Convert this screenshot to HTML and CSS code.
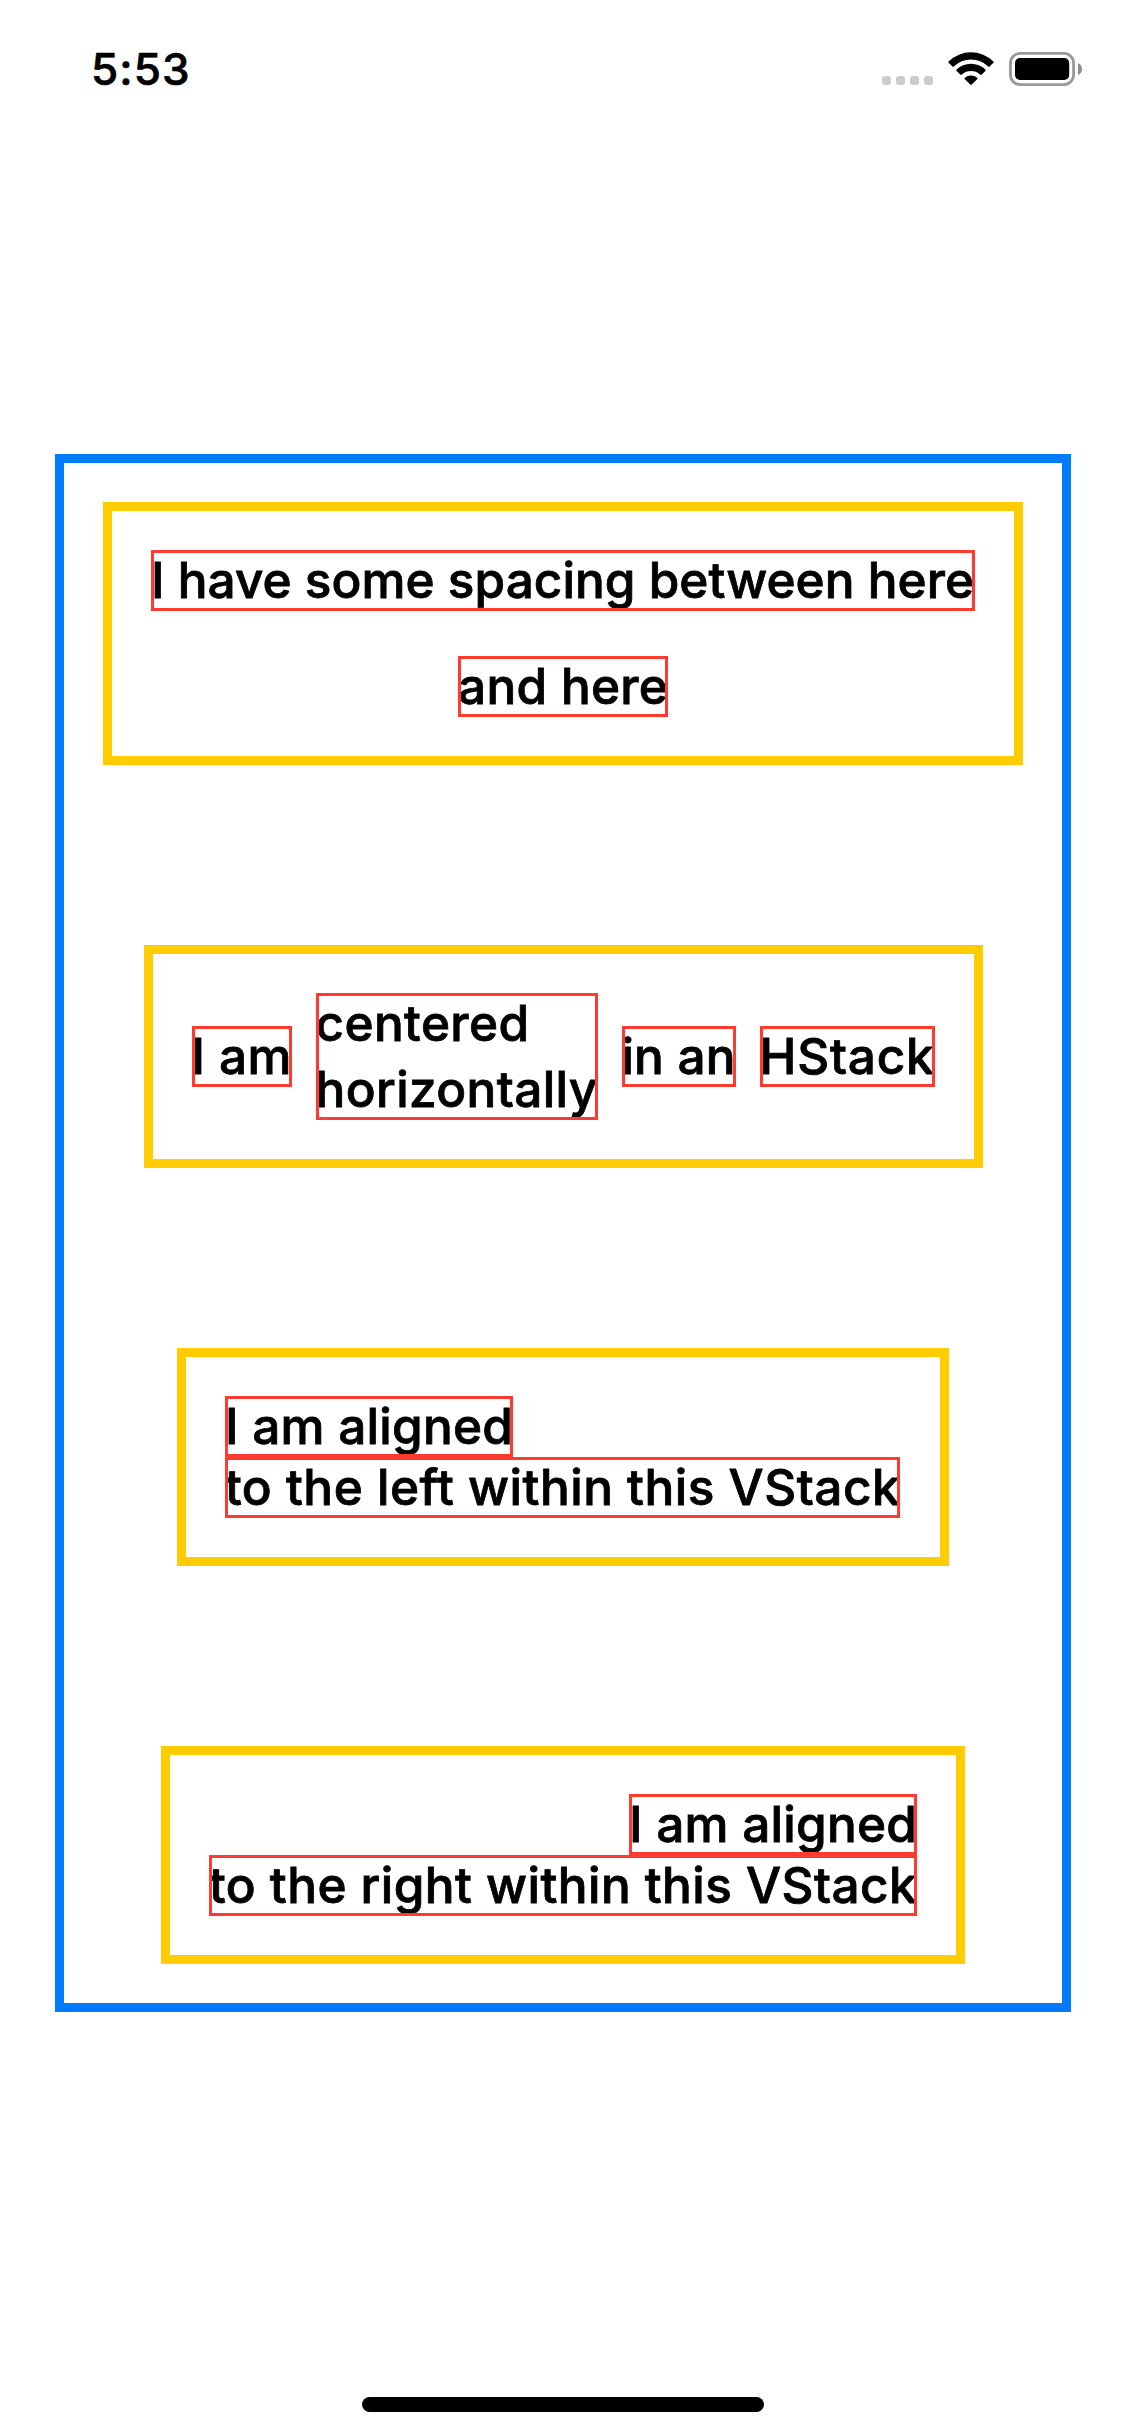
FILE: index.html
```html
<!DOCTYPE html>
<html lang="en">
<head>
<meta charset="utf-8">
<title>Stacks</title>
<link rel="stylesheet" href="styles.css">
</head>
<body>
<div class="screen">
  <header class="status-bar">
    <span class="time">5:53</span>
    <div class="indicators">
      <div class="cellular"><i class="dot"></i><i class="dot"></i><i class="dot"></i><i class="dot"></i></div>
      <svg class="wifi" width="46" height="34" viewBox="0 0 46 34" aria-label="Wi-Fi">
        <path d="M0.6 9.4A32 32 0 0 1 45.4 9.4Q46 10 45.4 10.7L41.5 14.5Q40.9 15 40.2 14.4A25 25 0 0 0 5.8 14.4Q5.1 15 4.5 14.5L0.6 10.7Q0 10 0.6 9.4Z"/>
        <path d="M8.6 17.6A20.6 20.6 0 0 1 37.4 17.6Q38 18.3 37.4 18.9L33.4 22.7Q32.8 23.2 32.1 22.6A13.6 13.6 0 0 0 13.9 22.6Q13.2 23.2 12.6 22.7L8.6 18.9Q8 18.3 8.6 17.6Z"/>
        <path d="M16.6 25.9A9.6 9.6 0 0 1 29.4 25.9Q30 26.5 29.4 27.1L23.7 32.6Q23 33.2 22.3 32.6L16.6 27.1Q16 26.5 16.6 25.9Z"/>
      </svg>
      <svg class="battery" width="74" height="34" viewBox="0 0 74 34" aria-label="Battery">
        <rect x="1.4" y="1.4" width="63.2" height="31.2" rx="9.8" fill="none" stroke="#999" stroke-width="2.8"/>
        <rect x="6" y="6" width="54.2" height="22" rx="5"/>
        <path d="M69 11Q73 13 73 17T69 23Z" fill="#8c8c8c"/>
      </svg>
    </div>
  </header>

  <main class="outer-stack">
    <section class="stack spaced">
      <span class="label w-long">I have some spacing between here</span>
      <span class="label w-and">and here</span>
    </section>
    <section class="stack horizontal">
      <span class="label w-iam">I am</span>
      <span class="label two-line"><span class="lines">centered<br>horizontally</span></span>
      <span class="label w-in">in an</span>
      <span class="label w-hstack">HStack</span>
    </section>
    <section class="stack leading">
      <span class="label w-aligned">I am aligned</span>
      <span class="label w-left">to the left within this VStack</span>
    </section>
    <section class="stack trailing">
      <span class="label w-aligned">I am aligned</span>
      <span class="label w-right">to the right within this VStack</span>
    </section>
  </main>

  <div class="home-indicator"></div>
</div>
</body>
</html>
```
FILE: styles.css
```css
* { box-sizing: border-box; }

body {
  margin: 0;
  background: #fff;
  color: #000;
  font-family: Inter, "Liberation Sans", sans-serif;
}

.screen {
  display: flex;
  flex-direction: column;
  width: 1125px;
  height: 2436px;
}

/* Status bar */
.status-bar {
  display: flex;
  justify-content: space-between;
  align-items: flex-start;
  height: 132px;
  padding: 45px 42px 0 91px;
}

.time {
  font-size: 44px;
  font-weight: 500;
  line-height: 48px;
  letter-spacing: 1.1px;
  -webkit-text-stroke: 0.7px #000;
}

.indicators {
  display: flex;
  align-items: flex-end;
  padding-top: 7px;
}

.cellular {
  display: flex;
  gap: 5px;
  margin: 0 15px 0 0;
  padding-bottom: 1px;
}

.dot {
  width: 9px;
  height: 9px;
  border-radius: 3px;
  background: #ccc;
}

.wifi { margin-right: 15px; }

/* Stacks */
.outer-stack {
  display: flex;
  flex-direction: column;
  align-items: center;
  gap: 180px;
  width: 1016px;
  margin: 322px 0 0 55px;
  padding: 39px;
  border: 9px solid #007aff;
}

.stack {
  display: flex;
  flex-direction: column;
  padding: 39px;
  border: 9px solid #fc0;
}

.spaced { align-items: center; gap: 45px; }
.horizontal { flex-direction: row; align-items: center; gap: 24px; }
.leading { align-items: flex-start; padding-right: 40px; }
.trailing { align-items: flex-end; }

.label {
  position: relative;
  height: 61px;
  font-size: 49.5px;
  font-weight: 500;
  line-height: 60px;
  white-space: nowrap;
  -webkit-text-stroke: 0.8px #000;
}

/* Frame is painted over the glyphs */
.label::after {
  content: "";
  position: absolute;
  inset: 0;
  border: 3px solid #ff3b30;
}

.two-line {
  width: 282px;
  height: 127px;
  line-height: 66px;
  letter-spacing: 0.4px;
}

.lines {
  display: block;
  margin-top: -3px;
}

.w-long { width: 824px; letter-spacing: 0.04px; }
.w-and { width: 210px; letter-spacing: 0.3px; }
.w-iam { width: 100px; letter-spacing: 0.4px; }
.w-in { width: 114px; letter-spacing: 0.15px; }
.w-hstack { width: 175px; letter-spacing: 0.8px; }
.w-aligned { width: 288px; letter-spacing: 0.25px; }
.w-left { width: 675px; letter-spacing: 0.5px; }
.w-right { width: 708px; letter-spacing: 0.45px; }

.home-indicator {
  width: 402px;
  height: 15px;
  margin: auto auto 24px 362px;
  border-radius: 8px;
  background: #000;
}
```
